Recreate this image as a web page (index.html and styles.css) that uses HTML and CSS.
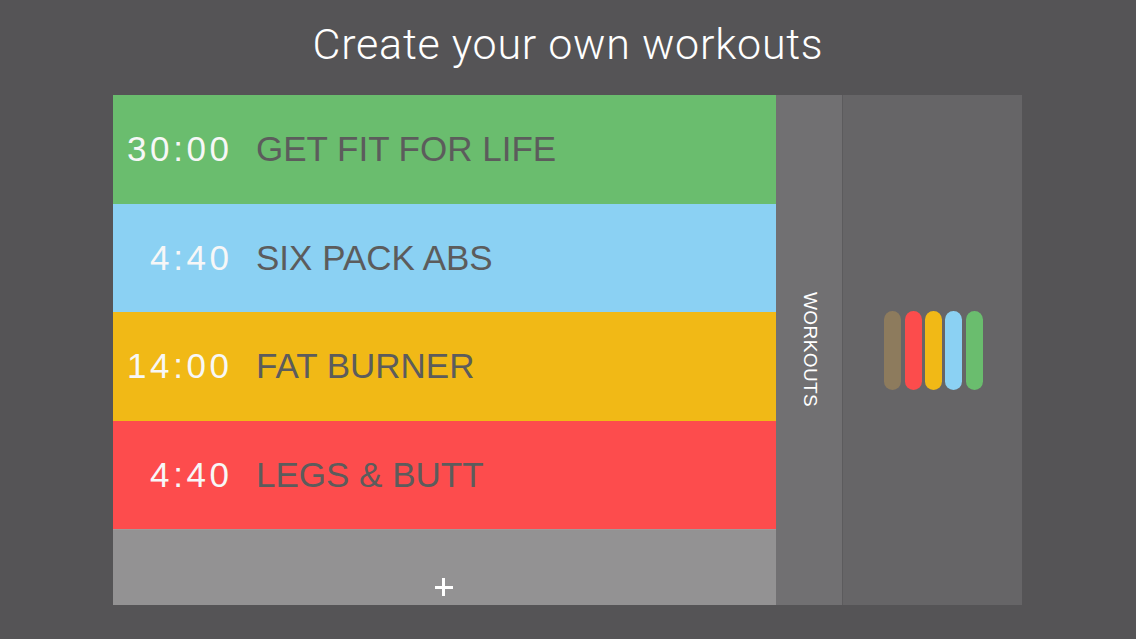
FILE: index.html
```
<!DOCTYPE html>
<html>
<head>
<meta charset="utf-8">
<link rel="stylesheet" href="styles.css">
</head>
<body>
<header class="title">Create your own workouts</header>
<main class="device">
  <section class="list">
    <div class="row green"><span class="time">30:00</span><span class="name">GET FIT FOR LIFE</span></div>
    <div class="row blue"><span class="time">4:40</span><span class="name">SIX PACK ABS</span></div>
    <div class="row yellow"><span class="time">14:00</span><span class="name">FAT BURNER</span></div>
    <div class="row red"><span class="time">4:40</span><span class="name">LEGS &amp; BUTT</span></div>
    <div class="add"><span class="plus" aria-label="Add"></span></div>
  </section>
  <aside class="tab"><span class="tab-label">WORKOUTS</span></aside>
  <aside class="panel">
    <div class="bars">
      <span class="bar brown"></span>
      <span class="bar c-red"></span>
      <span class="bar c-yellow"></span>
      <span class="bar c-blue"></span>
      <span class="bar c-green"></span>
    </div>
  </aside>
</main>
</body>
</html>
```
FILE: styles.css
```
html, body {
  margin: 0;
  padding: 0;
}
body {
  width: 1136px;
  height: 639px;
  background: #555456;
  overflow: hidden;
  font-family: "Liberation Sans", Arial, sans-serif;
}
.title {
  height: 95px;
  box-sizing: border-box;
  padding-top: 19px;
  text-align: center;
  color: #ffffff;
  font-family: Roboto, "Liberation Sans", sans-serif;
  font-weight: 300;
  font-size: 43px;
  line-height: 50px;
  letter-spacing: 0.75px;
}
.device {
  display: flex;
  margin-left: 113px;
  width: 909px;
  height: 510px;
}
.list {
  width: 663px;
  display: flex;
  flex-direction: column;
}
.row {
  height: 108.5px;
  display: flex;
  align-items: center;
  font-size: 35px;
  flex-shrink: 0;
}
.time {
  width: 119.6px;
  text-align: right;
  color: #f7f7f7;
  letter-spacing: 3.6px;
  margin-right: -3.6px;
}
.name {
  margin-left: 27px;
  color: #5c5c5c;
}
.green { background: #6abd6e; }
.blue { background: #8bd1f3; }
.yellow { background: #f1b916; }
.red { background: #fd4c4d; }
.add {
  flex: 1;
  background: #939293;
  display: flex;
  justify-content: center;
  align-items: flex-start;
  border-top: 1px solid #a09a9a;
}
.plus {
  position: relative;
  display: block;
  width: 18px;
  height: 18px;
  margin-top: 48px;
  margin-left: -2px;
}
.plus::before,
.plus::after {
  content: "";
  position: absolute;
  background: #ffffff;
}
.plus::before {
  left: 0;
  right: 0;
  top: 7.5px;
  height: 3px;
}
.plus::after {
  top: 0;
  bottom: 0;
  left: 7.5px;
  width: 3px;
}
.tab {
  width: 66px;
  background: #717072;
  display: flex;
  align-items: center;
  justify-content: center;
}
.tab-label {
  display: block;
  writing-mode: vertical-rl;
  color: #ffffff;
  font-size: 19px;
  letter-spacing: 0.4px;
  margin-left: 1px;
}
.panel {
  width: 180px;
  background: #666567;
  border-left: 1px solid #5c5b5d;
  box-sizing: border-box;
  display: flex;
  align-items: center;
  justify-content: center;
}
.bars {
  display: flex;
  gap: 3.3px;
  margin-left: 2px;
}
.bar {
  display: block;
  width: 17px;
  height: 79px;
  border-radius: 8.5px;
}
.brown { background: #8d7b5d; }
.c-red { background: #fc4c4c; }
.c-yellow { background: #f1b916; }
.c-blue { background: #8bd1f3; }
.c-green { background: #6abd6e; }
```
